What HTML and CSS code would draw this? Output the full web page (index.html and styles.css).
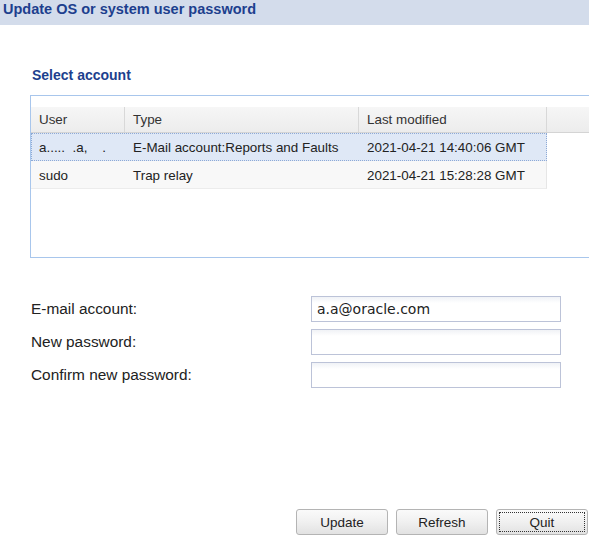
FILE: index.html
```html
<!DOCTYPE html>
<html>
<head>
<meta charset="utf-8">
<link rel="stylesheet" href="styles.css">
</head>
<body>
<div class="page">
  <div class="titlebar">Update OS or system user password</div>
  <div class="section-title">Select account</div>
  <div class="grid-box">
    <div class="grid-head">
      <div class="hcell c-user">User</div>
      <div class="hcell c-type">Type</div>
      <div class="hcell c-mod">Last modified</div>
      <div class="hcell c-fill"></div>
    </div>
    <div class="grid-row selected">
      <div class="cell c-user">a.....&nbsp;&nbsp;.a,&nbsp;&nbsp;&nbsp;&nbsp;.</div>
      <div class="cell c-type">E-Mail account:Reports and Faults</div>
      <div class="cell c-mod">2021-04-21 14:40:06 GMT</div>
    </div>
    <div class="grid-row">
      <div class="cell c-user">sudo</div>
      <div class="cell c-type">Trap relay</div>
      <div class="cell c-mod">2021-04-21 15:28:28 GMT</div>
    </div>
  </div>
  <div class="form">
    <div class="form-row">
      <label class="form-label">E-mail account:</label>
      <div class="input">a.a@oracle.com</div>
    </div>
    <div class="form-row">
      <label class="form-label">New password:</label>
      <div class="input"></div>
    </div>
    <div class="form-row">
      <label class="form-label">Confirm new password:</label>
      <div class="input"></div>
    </div>
  </div>
  <div class="buttons">
    <div class="btn">Update</div>
    <div class="btn">Refresh</div>
    <div class="btn focused"><span class="focus-ring">Quit</span></div>
  </div>
</div>
</body>
</html>
```
FILE: styles.css
```css
html, body {
  margin: 0;
  padding: 0;
  background: #ffffff;
  overflow: hidden;
}
.page {
  width: 589px;
  height: 542px;
  display: flex;
  flex-direction: column;
  font-family: "Liberation Sans", Arial, sans-serif;
  color: #222;
  overflow: hidden;
}
.titlebar {
  height: 25px;
  box-sizing: border-box;
  background: #d3dceb;
  color: #1d3f8e;
  font-weight: bold;
  font-size: 14.5px;
  line-height: 17px;
  padding: 1px 0 0 3px;
  white-space: nowrap;
}
.section-title {
  margin: 42px 0 0 32px;
  color: #1d3f8e;
  font-weight: bold;
  font-size: 14px;
  line-height: 16px;
}
.grid-box {
  margin: 12px 0 0 30px;
  width: 580px;
  height: 163px;
  box-sizing: border-box;
  border: 1px solid #a8c6ec;
  padding-top: 11px;
  background: #fff;
}
.grid-head {
  display: flex;
  height: 25px;
  background: linear-gradient(#f6f6f6, #ececec);
  border-bottom: 1px solid #d4d4d4;
  font-size: 13.4px;
}
.hcell {
  box-sizing: border-box;
  padding-left: 8px;
  line-height: 26px;
  border-right: 1px solid #d8d8d8;
  color: #333;
}
.c-user { width: 94px; flex: none; box-sizing: border-box; }
.c-type { width: 234px; flex: none; box-sizing: border-box; }
.c-mod { width: 188px; flex: none; box-sizing: border-box; }
.c-fill { flex: 1; border-right: none; }
.grid-row {
  display: flex;
  width: 516px;
  height: 28px;
  box-sizing: border-box;
  background: #f8f8f8;
  border-right: 1px solid #e6e6e6;
  border-bottom: 1px solid #ececec;
  font-size: 13.4px;
}
.grid-row.selected {
  background: #dfe8f6;
  border: 1px dotted #8eaad6;
}
.cell {
  padding-left: 8px;
  line-height: 29px;
  white-space: nowrap;
  overflow: hidden;
  color: #222;
}
.grid-row.selected .cell {
  line-height: 28px;
}
.grid-row.selected .c-user { width: 93px; padding-left: 7px; }
.form {
  margin-top: 37px;
  display: flex;
  flex-direction: column;
  gap: 6px;
}
.form-row {
  display: flex;
  align-items: center;
  height: 27px;
}
.form-label {
  width: 280px;
  padding-left: 31px;
  font-size: 15.4px;
  line-height: 24px;
  color: #222;
}
.input {
  width: 250px;
  height: 26px;
  box-sizing: border-box;
  border: 1px solid #bcc3d8;
  background: linear-gradient(#f0f2f6, #ffffff 6px);
  font-family: "DejaVu Sans", sans-serif;
  font-size: 14px;
  line-height: 24px;
  padding-left: 5px;
  color: #222;
}
.buttons {
  margin-top: auto;
  margin-bottom: 7px;
  display: flex;
  justify-content: flex-end;
  gap: 8px;
  padding-right: 1px;
}
.btn {
  width: 92px;
  height: 26px;
  box-sizing: border-box;
  border: 1px solid #b4b4b4;
  border-radius: 3px;
  background: linear-gradient(#fafafa, #f0f0f0 50%, #e2e2e2);
  font-size: 13.5px;
  line-height: 25px;
  text-align: center;
  color: #222;
}
.btn.focused {
  padding: 2px;
}
.focus-ring {
  display: block;
  height: 20px;
  line-height: 19px;
  border: 1px dotted #333;
  box-sizing: border-box;
}
```
